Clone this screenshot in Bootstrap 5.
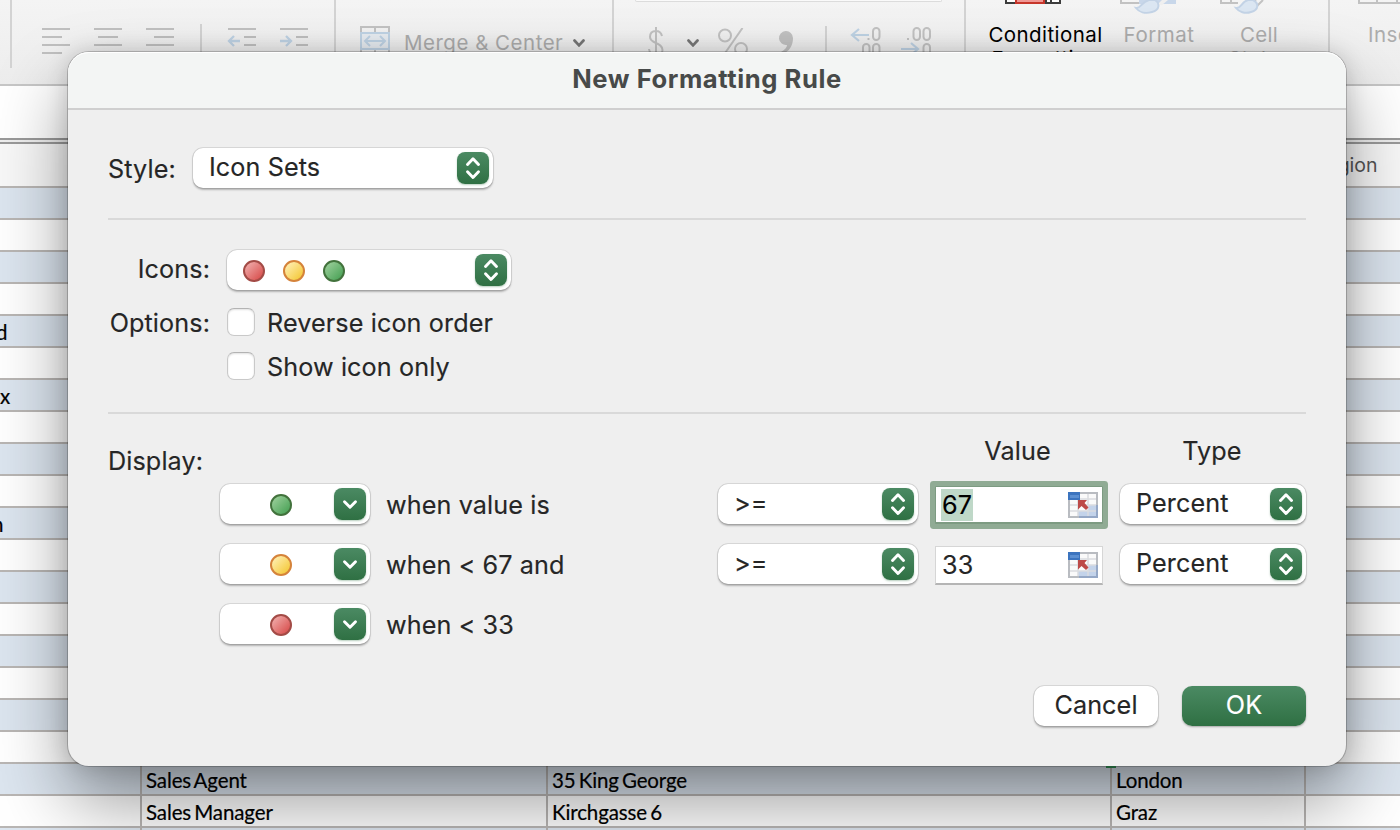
<!DOCTYPE html>
<html lang="en">
<head>
<meta charset="utf-8">
<title>New Formatting Rule</title>
<link href="https://cdn.jsdelivr.net/npm/bootstrap@5.3.0/dist/css/bootstrap.min.css" rel="stylesheet">
<style>
body{width:1400px;height:830px;background:#fff;font-family:Inter,"Liberation Sans",sans-serif;color:#262626;overflow:hidden}
svg{display:block;flex:none}
.sheet{height:830px;overflow:hidden}
.ribbon{height:86px;background:linear-gradient(#f4f4f4,#ededed);border-bottom:2px solid #c6c6c6;color:#adadad;font-size:20.5px}
.rgroup{height:68px;border-right:2px solid #d3d3d3;flex:none}
.rsep{width:2px;height:44px;background:#d3d3d3;margin-top:24px}
.rlabel{line-height:24px;white-space:nowrap}
.numbox{width:307px;height:2px;margin-left:21px;border:1px solid #dcdcdc;border-top:0;border-radius:0 0 4px 4px;background:#fafafa}
.numfmt{margin-top:22px;height:44px}
.rcol{text-align:center;line-height:24px}
.rcol svg{margin:0 auto 18px}
.formula{height:52px;background:#fff}
.rules{height:6px;border-top:2px solid #9a9a9a;border-bottom:2px solid #9a9a9a;background:#eee}
.gridrow{display:grid;grid-template-columns:142px 406px 564px 194px 94px;height:32px;border-bottom:2px solid #b9b6b4;font-family:Lato,"Liberation Sans",sans-serif;font-size:20.5px;letter-spacing:-.12px;word-spacing:-2px;-webkit-text-stroke:.2px #000;line-height:32px;color:#000;background:#fff}
.gridrow>div{border-right:2px solid #b9b6b4;padding-left:4px;white-space:nowrap;height:30px}
.gridrow>div:first-child{padding-left:0}
.gridrow>div:last-child{border-right:0}
.gridrow.band{background:#dce5ef}
.gridrow.heads{height:44px;background:#f8f8f8;font-family:Inter,sans-serif;line-height:43px;letter-spacing:0;color:#555;-webkit-text-stroke:0}
.gridrow.heads>div{padding-left:8px;font-size:19.5px;height:42px}
.cellmark{width:10px;height:3px;left:1106px;top:765px;background:#1f5a35}
.dialog{left:68px;top:52px;width:1278px;height:714px;border-radius:21px;background:#efefef;box-shadow:0 0 0 1px rgba(0,0,0,.2),0 36px 72px rgba(0,0,0,.4),0 0 22px rgba(0,0,0,.16);font-size:25.2px;letter-spacing:.1px;line-height:32px;white-space:nowrap;-webkit-text-stroke:.15px}
.titlebar{height:58px;border-bottom:2px solid #cfcfcf;background:#f3f5f4;border-radius:21px 21px 0 0;box-shadow:inset 0 1px 0 #fff;font-weight:700;color:#474a49;font-size:25.6px;letter-spacing:.56px;line-height:54px;text-align:center;-webkit-text-stroke:0}
.dbody{padding:38px 40px 0}
.rule{height:2px;background:#d9d9d9}
.pop{height:40px;border-radius:10px;background:#fff;box-shadow:0 0 0 .7px rgba(0,0,0,.12),0 1.5px 2px rgba(0,0,0,.26);padding:0 4px 0 16px;flex:none}
.pop>span{margin-top:-2px}
.knob{width:32px;height:32px;border-radius:8px;background:linear-gradient(#4b8a63,#2f7043);box-shadow:0 1px 2px rgba(47,112,67,.35);flex:none}
.dot{width:22px;height:22px;border-radius:50%;border:2px solid;flex:none;margin-top:2px}
.dot-r{border-color:#a34b46;background:linear-gradient(135deg,#efa9a8 10%,#d9514f 90%)}
.dot-y{border-color:#d5833a;background:linear-gradient(135deg,#ffeeb0 10%,#f4c93a 90%)}
.dot-g{border-color:#42723c;background:linear-gradient(135deg,#98cd98 10%,#4ca358 90%)}
.tick{width:28px;height:28px;border-radius:7px;border:1px solid #c9c9c9;border-top-color:#b3b3b3;background:#fff;box-shadow:inset 0 1px 2px rgba(0,0,0,.12);flex:none}
.lab{width:102px;text-align:right;flex:none}
.colhead{line-height:30px}
.drows{display:grid;grid-template-columns:166px 332px 217px 185px 186px;grid-auto-rows:40px;row-gap:20px;margin-left:112px}
.when{padding-top:5px}
.field{width:168px;height:39px;margin-top:2px;background:#fff;border:1px solid #d6d6d6;border-bottom:2px solid #b5b5b5;padding:0 4px 0 6px}
.field.focus{height:38px;border:1px solid #7d9b82;border-bottom:2px solid #7d9b82;box-shadow:0 0 0 5px #90ab94;border-radius:1px;color:#000}
.sel{background:#bfd8c8;padding:0 1px;margin-left:-1px;height:32px}
.push{width:124px;height:40px;border-radius:10px;text-align:center;line-height:38px;background:#fff;box-shadow:0 0 0 .7px rgba(0,0,0,.12),0 1.5px 2px rgba(0,0,0,.26)}
.push.ok{background:linear-gradient(#4b8a63,#2f7043);color:#fff;box-shadow:0 1px 2px rgba(0,0,0,.3)}
</style>
</head>
<body>
<svg width="0" height="0" class="position-absolute" aria-hidden="true">
  <symbol id="updown" viewBox="0 0 32 32"><path d="M10.5 12.500 16 6.700l5.500 5.800M10.500 19.800 16 25.500l5.500-5.700" fill="none" stroke="#fff" stroke-width="2.900" stroke-linecap="round" stroke-linejoin="round"/></symbol>
  <symbol id="down" viewBox="0 0 32 32"><path d="M10.500 13.700 16 19.300l5.500-5.600" fill="none" stroke="#fff" stroke-width="2.900" stroke-linecap="round" stroke-linejoin="round"/></symbol>
  <symbol id="picker" viewBox="0 0 30 26">
    <path fill="#fafafa" d="M0 0h30v26H0z"/>
    <path fill="#c3d3ea" d="M20 13h10v13H10v-7h10z"/>
    <path d="M10 1v25M20 1v25M0 13h30M0 19h30M10 7h20" stroke="#dadce0" stroke-width="1.500"/>
    <path d="M1 8v17h28V1H12" fill="none" stroke="#b9bcc1" stroke-width="2"/>
    <path d="M11 25h18V13" fill="none" stroke="#95a8c6" stroke-width="2"/>
    <path fill="#3c74bf" d="M0 0h12v8H0z"/><path fill="#5b8fd2" d="M2 3h9v3H2z"/>
    <path fill="#bd4a48" d="M10 8h9l-2.500 3 4 4.500-2.500 2.500-4.500-4-3.500 3.500z"/>
  </symbol>
  <symbol id="chev" viewBox="0 0 12 8"><path d="M1.500 1.500 6 6.300l4.500-4.800" fill="none" stroke="#777" stroke-width="2.700" stroke-linecap="round"/></symbol>
</svg>

<main class="position-relative sheet">
  <div class="ribbon d-flex">
    <div class="rgroup" style="width:12px"></div>
    <div class="rgroup d-flex" style="width:324px">
      <svg width="184" height="68" style="margin-left:4px"><path d="M26 29h28M26 37h20M26 45h28M26 53h20M78 29h28M82 37h20M78 45h28M82 53h20M130 29h28M138 37h20M130 45h28M138 53h20" stroke="#c0c0c0" stroke-width="2"/></svg>
      <div class="rsep"></div>
      <svg width="110" height="68"><path d="M26 29h28M42 37h12M42 45h12M26 53h28M78 29h28M94 37h12M94 45h12M78 53h28" stroke="#c0c0c0" stroke-width="2"/><path d="M38 41H27m5-5-5 5 5 5M78 41h11m-5-5 5 5-5 5" fill="none" stroke="#bfd3e5" stroke-width="2.300"/></svg>
    </div>
    <div class="rgroup d-flex" style="width:278px">
      <svg width="30" height="32" style="margin:26px 14px 0 24px"><path d="M1 6V1h28v5M15 1v5M1 24v7h28v-7M15 24v7" fill="none" stroke="#c2c2c2" stroke-width="2"/><rect x="1" y="7" width="28" height="16" fill="#e8edf2" stroke="#bfd3e5" stroke-width="2"/><path d="M5 15h20M10 10l-5 5 5 5M20 10l5 5-5 5" fill="none" stroke="#bfd3e5" stroke-width="2"/></svg>
      <span class="rlabel" style="margin-top:31px;width:169px;letter-spacing:.5px">Merge &amp; Center</span>
      <svg width="12" height="8" style="margin-top:39px"><use href="#chev"/></svg>
    </div>
    <div class="rgroup" style="width:352px">
      <div class="numbox"></div>
      <div class="d-flex numfmt">
        <svg width="16" height="34" style="margin:3px 23px 0 34px"><path d="M14 9C13 5 11 4 8 4 4 4 2 6.500 2 10c0 7 12.500 5 12.500 13 0 3.500-2.500 5.500-6.500 5.500S1.500 26 1 22M8 0v32" fill="none" stroke="#c2c2c2" stroke-width="2"/></svg>
        <svg width="12" height="8" style="margin-top:15px"><use href="#chev"/></svg>
        <svg width="30" height="30" style="margin:4px 0 0 19px"><circle cx="7" cy="7.500" r="6" fill="none" stroke="#c2c2c2" stroke-width="2"/><circle cx="23" cy="21" r="6" fill="none" stroke="#c2c2c2" stroke-width="2"/><path d="M24.500 0 5 28" stroke="#c2c2c2" stroke-width="2"/></svg>
        <svg width="16" height="28" style="margin:6px 31px 0 30px"><path d="M15 8c0 8-4 14-11 16l-1-2c4-2 6-5 6-7A7 7 0 1 1 15 8z" fill="#c2c2c2"/></svg>
        <div class="rsep" style="margin-top:2px"></div>
        <svg width="32" height="36" style="margin:-2px 20px 0 22px"><path d="M20 13H3m7-6-7 6 7 6" fill="none" stroke="#bfd3e5" stroke-width="2.200"/><path fill="#c2c2c2" d="M18.500 16h2v2h-2z"/><g fill="none" stroke="#c2c2c2" stroke-width="2"><rect x="24" y="6" width="6.500" height="12" rx="3.200"/><rect x="14" y="22" width="6.500" height="12" rx="3.200"/><rect x="24" y="22" width="6.500" height="12" rx="3.200"/></g></svg>
        <svg width="32" height="36" style="margin-top:-2px"><path d="M0 27h17m-7-6 7 6-7 6" fill="none" stroke="#bfd3e5" stroke-width="2.200"/><path fill="#c2c2c2" d="M6 16h2v2H6z"/><g fill="none" stroke="#c2c2c2" stroke-width="2"><rect x="12.500" y="6" width="6.500" height="12" rx="3.200"/><rect x="22.500" y="6" width="6.500" height="12" rx="3.200"/><rect x="22.500" y="22" width="6.500" height="12" rx="3.200"/></g></svg>
      </div>
    </div>
    <div class="rgroup d-flex" style="width:364px">
      <div class="rcol text-black" style="width:115px;margin-left:22px;letter-spacing:.42px"><svg width="56" height="5" style="margin-left:17px"><path d="M0 0h56v4H0z" fill="#3d3d3d"/><path d="M2 0h8v2H2zM42 0h3v2h-3zM47 0h7v2h-7z" fill="#fff"/><path d="M10 0h30v4H10z" fill="#c6362b"/><path d="M12 0h26v2H12z" fill="#f09794"/></svg>Conditional<br>Formatting</div>
      <div class="rcol" style="width:72px;margin-left:20px;letter-spacing:.5px"><svg width="60" height="15" style="margin-bottom:8px;margin-left:-3px"><path d="M1 0v3h18" fill="none" stroke="#c2c2c2" stroke-width="2"/><path d="M19 0h37v4H19z" fill="#c8d7ea"/><path d="M42 0h6l-6 5h-5z" fill="#efefef"/><path d="M16 8c5 1 5-6 13-8h6c5 3 5 10-3 12-7 2-13 0-16-4z" fill="#dbe6f2" stroke="#c3d3e6" stroke-width="2"/></svg>Format<br>as Table</div>
      <div class="rcol" style="width:76px;margin-left:26px;letter-spacing:.3px"><svg width="60" height="15" style="margin-bottom:8px;margin-left:-1px"><path d="M1 0v3h17M11 0v3" fill="none" stroke="#c2c2c2" stroke-width="2"/><path d="M43 0l-6 6M36 0l-4 3" stroke="#c2c2c2" stroke-width="2"/><path d="M16 8c5 1 5-6 12-8h5c6 3 6 10-2 12-6 2-12 0-15-4z" fill="#dbe6f2" stroke="#c3d3e6" stroke-width="2"/></svg>Cell<br>Styles</div>
    </div>
    <div class="overflow-hidden" style="padding-left:28px"><svg width="60" height="5" style="margin-bottom:18px"><path d="M1 0v3h58M19 0v3M39 0v3" fill="none" stroke="#c2c2c2" stroke-width="2"/></svg><div class="rlabel" style="margin-left:10px;letter-spacing:.4px">Insert</div></div>
  </div>
  <div class="formula"></div>
  <div class="rules"></div>
  <div class="gridrow heads"><div></div><div></div><div></div><div></div><div>Region</div></div>
  <div class="gridrow band"><div></div><div></div><div></div><div></div><div></div></div>
  <div class="gridrow"><div></div><div></div><div></div><div></div><div></div></div>
  <div class="gridrow band"><div></div><div></div><div></div><div></div><div></div></div>
  <div class="gridrow"><div></div><div></div><div></div><div></div><div></div></div>
  <div class="gridrow band"><div><span style="margin-left:-4px">d</span></div><div></div><div></div><div></div><div></div></div>
  <div class="gridrow"><div></div><div></div><div></div><div></div><div></div></div>
  <div class="gridrow band"><div>x</div><div></div><div></div><div></div><div></div></div>
  <div class="gridrow"><div></div><div></div><div></div><div></div><div></div></div>
  <div class="gridrow band"><div></div><div></div><div></div><div></div><div></div></div>
  <div class="gridrow"><div></div><div></div><div></div><div></div><div></div></div>
  <div class="gridrow band"><div><span style="margin-left:-8px">n</span></div><div></div><div></div><div></div><div></div></div>
  <div class="gridrow"><div></div><div></div><div></div><div></div><div></div></div>
  <div class="gridrow band"><div></div><div></div><div></div><div></div><div></div></div>
  <div class="gridrow"><div></div><div></div><div></div><div></div><div></div></div>
  <div class="gridrow band"><div></div><div></div><div></div><div></div><div></div></div>
  <div class="gridrow"><div></div><div></div><div></div><div></div><div></div></div>
  <div class="gridrow band"><div></div><div></div><div></div><div></div><div></div></div>
  <div class="gridrow"><div></div><div></div><div></div><div></div><div></div></div>
  <div class="gridrow band"><div></div><div>Sales Agent</div><div>35 King George</div><div>London</div><div></div></div>
  <div class="gridrow"><div></div><div>Sales Manager</div><div>Kirchgasse 6</div><div>Graz</div><div></div></div>
  <div class="gridrow band"><div></div><div></div><div></div><div></div><div></div></div>
  <div class="cellmark position-absolute"></div>

  <section class="dialog position-absolute" role="dialog">
    <div class="titlebar">New Formatting Rule</div>
    <div class="dbody">
      <div class="d-flex align-items-center">
        <span style="width:85px;margin-top:2px">Style:</span>
        <div class="pop d-flex align-items-center justify-content-between" style="width:300px"><span>Icon Sets</span><svg class="knob"><use href="#updown"/></svg></div>
      </div>
      <div class="rule" style="margin-top:30px"></div>
      <div class="d-flex align-items-center" style="margin-top:30px">
        <span class="lab" style="margin-top:-2px">Icons:</span>
        <div class="pop d-flex align-items-center" style="width:284px;margin-left:17px"><i class="dot dot-r"></i><i class="dot dot-y" style="margin-left:18px"></i><i class="dot dot-g" style="margin-left:18px"></i><svg class="knob ms-auto"><use href="#updown"/></svg></div>
      </div>
      <div class="d-flex align-items-center" style="margin-top:18px;height:28px"><span class="lab" style="margin-top:2px">Options:</span><span class="tick" style="margin:0 12px 0 17px"></span><span style="margin-top:2px">Reverse icon order</span></div>
      <div class="d-flex align-items-center" style="margin-top:16px;height:28px"><span class="tick" style="margin:0 12px 0 119px"></span><span style="margin-top:2px">Show icon only</span></div>
      <div class="rule" style="margin-top:32px"></div>
      <div class="d-flex" style="height:70px;padding-top:22px">
        <span class="flex-shrink-0" style="width:826px;padding-top:9px">Display:</span>
        <span class="colhead text-center flex-shrink-0" style="width:167px">Value</span>
        <span class="colhead text-center flex-shrink-0" style="width:186px;margin-left:18px">Type</span>
      </div>
      <div class="drows">
        <div class="pop d-flex align-items-center justify-content-between" style="width:150px;padding-left:50px"><i class="dot dot-g"></i><svg class="knob"><use href="#down"/></svg></div>
        <div class="when">when value is</div>
        <div class="pop d-flex align-items-center justify-content-between" style="width:200px"><span>&gt;=</span><svg class="knob"><use href="#updown"/></svg></div>
        <div class="field focus d-flex align-items-center justify-content-between"><span class="sel">67</span><svg width="30" height="26"><use href="#picker"/></svg></div>
        <div class="pop d-flex align-items-center justify-content-between"><span>Percent</span><svg class="knob"><use href="#updown"/></svg></div>

        <div class="pop d-flex align-items-center justify-content-between" style="width:150px;padding-left:50px"><i class="dot dot-y"></i><svg class="knob"><use href="#down"/></svg></div>
        <div class="when">when &lt; 67 and</div>
        <div class="pop d-flex align-items-center justify-content-between" style="width:200px"><span>&gt;=</span><svg class="knob"><use href="#updown"/></svg></div>
        <div class="field d-flex align-items-center justify-content-between"><span>33</span><svg width="30" height="26"><use href="#picker"/></svg></div>
        <div class="pop d-flex align-items-center justify-content-between"><span>Percent</span><svg class="knob"><use href="#updown"/></svg></div>

        <div class="pop d-flex align-items-center justify-content-between" style="width:150px;padding-left:50px"><i class="dot dot-r"></i><svg class="knob"><use href="#down"/></svg></div>
        <div class="when">when &lt; 33</div>
      </div>
      <div class="d-flex justify-content-end" style="margin-top:42px;gap:24px"><div class="push">Cancel</div><div class="push ok">OK</div></div>
    </div>
    <div class="position-absolute" style="left:1038px;top:714px;width:10px;height:2px;background:#1f5a35"></div>
  </section>
</main>
<script src="https://cdn.jsdelivr.net/npm/bootstrap@5.3.0/dist/js/bootstrap.bundle.min.js"></script>
</body>
</html>
